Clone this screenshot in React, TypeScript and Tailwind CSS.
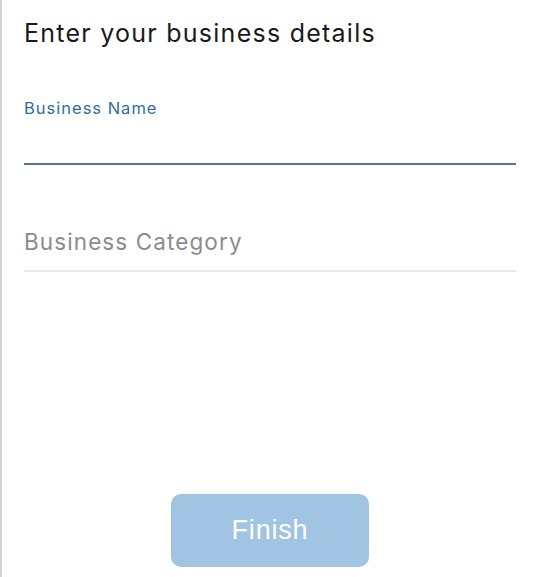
import React from "react";

export default function App() {
  return (
    <div className="w-[540px] h-[577px] bg-white border-l-2 border-[#d4d4d4] flex flex-col pl-[22px] pr-[24px] overflow-hidden" style={{ fontFamily: "Inter, 'Noto Sans', sans-serif" }}>
      <h1 className="mt-[17px] text-[25px] leading-[32px] text-[#1a1a1a] font-normal tracking-[1.25px]">Enter your business details</h1>
      <div className="mt-[49px] flex flex-col">
        <label className="text-[16.5px] leading-[20px] text-[#2f6f9e] tracking-[1px]">Business Name</label>
        <div className="mt-[45px] h-[2px] bg-[#4d7596]" />
      </div>
      <div className="mt-[63px] flex flex-col">
        <div className="text-[22.5px] leading-[28px] text-[#8c8c8c] tracking-[1.1px]">Business Category</div>
        <div className="mt-[14px] h-[2px] bg-[#e8e8e8]" />
      </div>
      <div className="flex-1" />
      <div className="flex justify-center mb-[10px]">
        <button className="w-[198px] h-[73px] rounded-[10px] bg-[#a1c4e2] text-white text-[27px] tracking-[0.8px]" style={{ fontFamily: "'Liberation Sans', Arial, sans-serif" }}>Finish</button>
      </div>
    </div>
  );
}
